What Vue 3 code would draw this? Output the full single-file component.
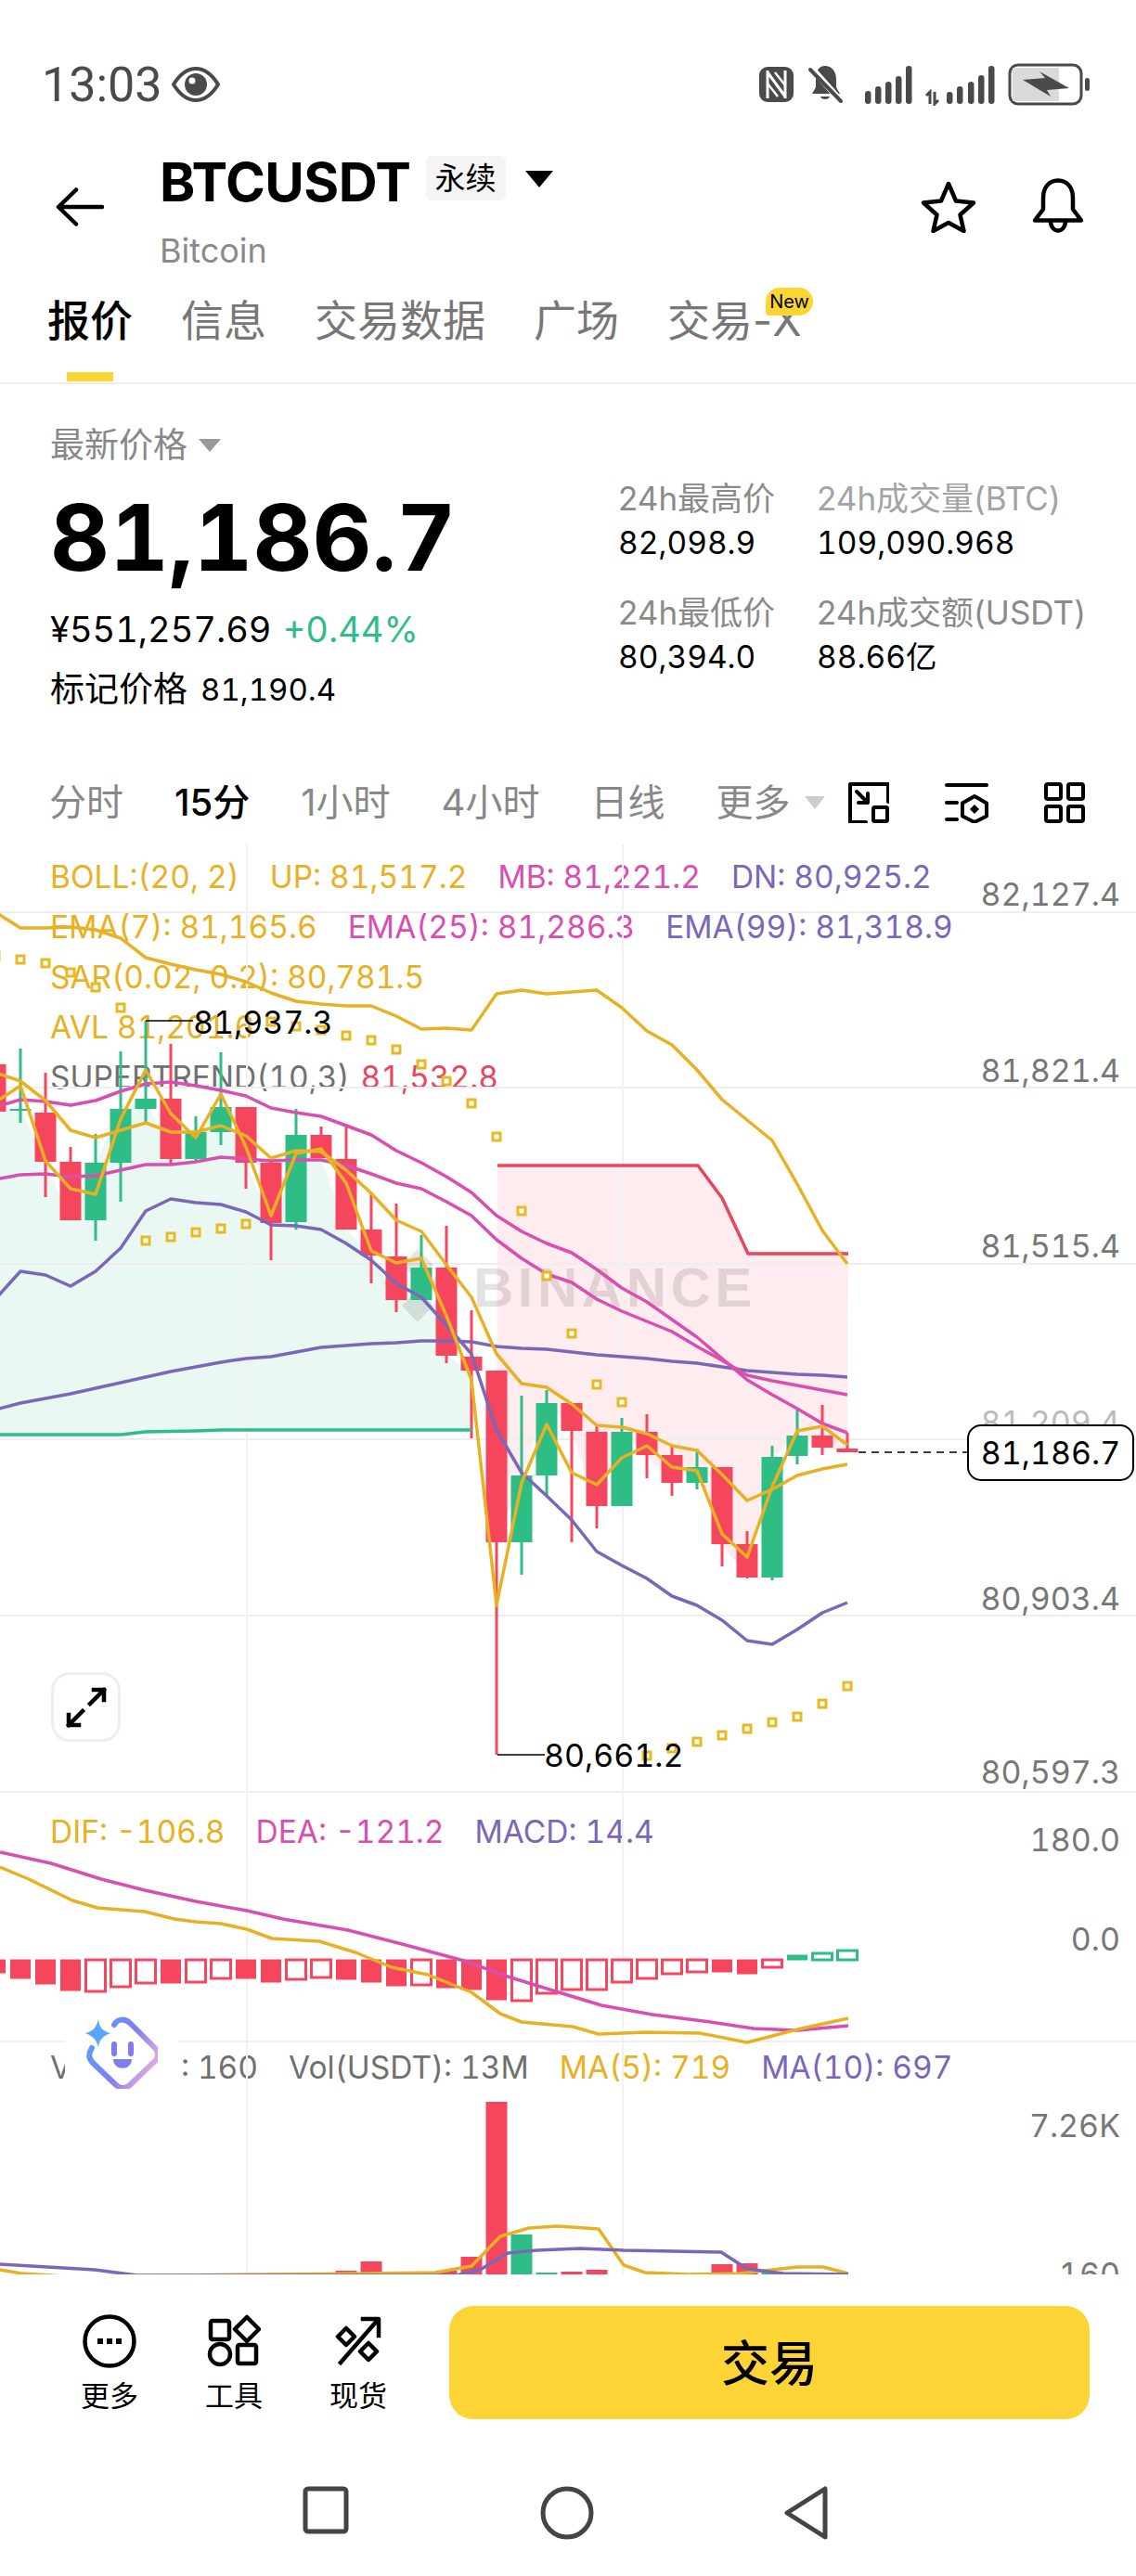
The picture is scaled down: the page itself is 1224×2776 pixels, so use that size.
<template>
  <div class="page">
    <!-- status bar -->
    <div class="status">
      <span class="clock">13:03</span>
      <svg class="eye" width="54" height="38" viewBox="0 0 54 38">
        <path d="M3 19C11 6 19 2 27 2s16 4 24 17c-8 13-16 17-24 17S11 32 3 19z" fill="none" stroke="#4a4a4a" stroke-width="4"/>
        <circle cx="27" cy="19" r="12" fill="#4a4a4a"/>
        <circle cx="23" cy="15" r="3.5" fill="#fff"/>
      </svg>
      <svg class="sys" width="358" height="46" viewBox="816 68 358 46">
        <rect x="818" y="72" width="37" height="38" rx="9" fill="#4a4a4a"/>
        <path d="M827 76v30M846 76v30M827 78l19 26" fill="none" stroke="#fff" stroke-width="3"/>
        <path d="M835 78l11 14M827 90l11 14" stroke="#fff" stroke-width="2.4"/>
        <path d="M889 71c7 0 12 6 12 14v9l4 7h-30l4-7v-9c0-8 3-14 10-14z" fill="#4a4a4a"/>
        <path d="M884 104c1 4 9 4 10 0z" fill="#4a4a4a"/>
        <path d="M874 73l33 37" stroke="#fff" stroke-width="7"/>
        <path d="M873 75l33 34" stroke="#4a4a4a" stroke-width="4" stroke-linecap="round"/>
        <rect v-for="b in signalA" :key="b.x" :x="b.x" :y="b.y" width="6.5" :height="112 - b.y" rx="3.2" fill="#4a4a4a"/>
        <path d="M1002 112V99l-4 4M1007 99v13l4-4" fill="none" stroke="#4a4a4a" stroke-width="3"/>
        <rect v-for="b in signalB" :key="b.x" :x="b.x" :y="b.y" width="6.5" :height="112 - b.y" rx="3.2" fill="#4a4a4a"/>
        <rect x="1088" y="70" width="77" height="42" rx="9" fill="#fff" stroke="#4a4a4a" stroke-width="3"/>
        <path d="M1091 73h50v36h-50z" fill="#dadada"/>
        <path d="M1102 86l24-2-6-7 32 18-24 2 4 7z" fill="#4a4a4a"/>
        <rect x="1169" y="84" width="5" height="14" rx="2.5" fill="#4a4a4a"/>
      </svg>
    </div>

    <!-- title -->
    <div class="head">
      <svg class="back" width="52" height="42" viewBox="0 0 52 42" fill="none" stroke="#000" stroke-width="4.5" stroke-linecap="round" stroke-linejoin="round">
        <path d="M50 21H4M22 2.500 3 21l19 18.500"/>
      </svg>
      <div class="head-text">
        <div class="title-row">
          <span class="symbol">BTCUSDT</span>
          <span class="badge">永续</span>
          <i class="caret-big"></i>
        </div>
        <div class="coin">Bitcoin</div>
      </div>
      <svg class="star" width="60" height="56" viewBox="0 0 60 56">
        <path d="M30 3l8 18.500 19 2-14.500 13 4 17.500L30 45 13.500 54l4-17.500L3 23.500l19-2z" fill="none" stroke="#000" stroke-width="4.500" stroke-linejoin="round"/>
      </svg>
      <svg class="bell" width="58" height="60" viewBox="0 0 58 60" fill="none" stroke="#000" stroke-width="4.500" stroke-linejoin="round">
        <path d="M29 2.500c11 0 16 9 16 19v12l9 12H4l9-12v-12c0-10 5-19 16-19z"/>
        <path d="M21 46c0 14 16 14 16 0"/>
      </svg>
    </div>

    <!-- tabs -->
    <div class="tabs">
      <div v-for="t in tabs" :key="t" class="tab" :class="{ active: t === '报价' }">
        {{ t }}
        <span v-if="t === '交易-X'" class="new">New</span>
      </div>
    </div>

    <!-- quote -->
    <div class="quote">
      <div class="quote-left">
        <div class="last-label">最新价格<i class="caret-grey"></i></div>
        <div class="last-price">81,186.7</div>
        <div class="sub-line">¥551,257.69 <span class="up">+0.44%</span></div>
        <div class="mark-line">标记价格<span class="mark-num">81,190.4</span></div>
      </div>
      <div class="stats">
        <div v-for="s in stats" :key="s.label" class="stat">
          <div class="stat-label">{{ s.label }}</div>
          <div class="stat-value">{{ s.value }}</div>
        </div>
      </div>
    </div>

    <!-- intervals -->
    <div class="intervals">
      <span v-for="k in intervals" :key="k" class="itv" :class="{ current: k === '15分' }">{{ k }}</span>
      <i class="caret-light"></i>
      <div class="itv-icons">
        <svg width="44" height="44" viewBox="0 0 44 44" fill="none" stroke="#000" stroke-width="4" stroke-linecap="round" stroke-linejoin="round">
          <path d="M43 21V2H2v41h17"/>
          <rect x="27" y="27" width="15" height="15" rx="1.500"/>
          <path d="M9 10l12 12M21 12v10H11"/>
        </svg>
        <svg width="47" height="44" viewBox="0 0 47 44" fill="none" stroke="#000" stroke-width="4" stroke-linecap="round" stroke-linejoin="round">
          <path d="M2 3h43M2 22h11M2 40h11"/>
          <path d="M32 15l13 7.500v14L32 43l-13-6.500v-14z"/>
          <path d="M32 24l5 5-5 5-5-5z" fill="#000" stroke="none"/>
        </svg>
        <svg width="44" height="44" viewBox="0 0 44 44" fill="none" stroke="#000" stroke-width="4" stroke-linejoin="round">
          <rect x="2" y="2" width="16" height="16" rx="2"/><rect x="26" y="2" width="16" height="16" rx="2"/>
          <rect x="2" y="26" width="16" height="16" rx="2"/><rect x="26" y="26" width="16" height="16" rx="2"/>
        </svg>
      </div>
    </div>

    <!-- chart -->
    <div class="chart">
      <div class="legend main-legend">
        <div class="row">
          <span class="c-y">BOLL:(20, 2)</span><span class="c-y">UP: 81,517.2</span>
          <span class="c-m">MB: 81,221.2</span><span class="c-p">DN: 80,925.2</span>
        </div>
        <div class="row">
          <span class="c-y">EMA(7): 81,165.6</span><span class="c-m">EMA(25): 81,286.3</span>
          <span class="c-p">EMA(99): 81,318.9</span>
        </div>
        <div class="row"><span class="c-y">SAR(0.02, 0.2): 80,781.5</span></div>
        <div class="row"><span class="c-y">AVL 81,201.6</span></div>
        <div class="row tight"><span class="c-g">SUPERTREND(10,3)</span><span class="c-r">81,532.8</span></div>
      </div>
      <div class="legend macd-legend">
        <div class="row">
          <span class="c-y">DIF: -106.8</span><span class="c-m">DEA: -121.2</span><span class="c-p">MACD: 14.4</span>
        </div>
      </div>
      <div class="legend vol-legend">
        <div class="row">
          <span class="c-g">Vol(BTC): 160</span><span class="c-g">Vol(USDT): 13M</span>
          <span class="c-y">MA(5): 719</span><span class="c-p">MA(10): 697</span>
        </div>
      </div>

      <svg class="plot" width="1224" height="1541" viewBox="0 912 1224 1541">
        <defs>
          <linearGradient id="aiGrad" x1="0" y1="0" x2="1" y2="0.500">
            <stop offset="0" stop-color="#58a6fb"/>
            <stop offset="0.6" stop-color="#7f7df0"/>
            <stop offset="1" stop-color="#d8a9dc"/>
          </linearGradient>
        </defs>

        <polygon :points="greenFill" fill="#2ebd85" fill-opacity="0.1"/>
        <polygon :points="redFill" fill="#f6465d" fill-opacity="0.1"/>

        <line v-for="y in gridY" :key="y" x1="0" x2="1224" :y1="y" :y2="y" stroke="#eeeeee" stroke-width="2"/>
        <line v-for="x in [266, 671]" :key="x" :x1="x" :x2="x" y1="912" y2="2453" stroke="#f2f2f2" stroke-width="2"/>

        <text x="510" y="1410" class="wm">BINANCE</text>
        <path d="M450 1348l17 17-17 17-17-17zM425 1373l12 12-12 12-12-12zM475 1373l12 12-12 12-12-12zM450 1392l17 17-17 18-17-18z" fill="#000" fill-opacity="0.1"/>

        <g v-for="c in candleBars" :key="c.x">
          <line :x1="c.x" :x2="c.x" :y1="c.wt" :y2="c.wb" :stroke="c.color" stroke-width="3"/>
          <rect :x="c.x - 11.500" :y="c.bt" width="23" :height="c.bb - c.bt" :fill="c.color"/>
        </g>

        <polyline points="-5,1548 131,1548 156,1545 211,1544 238,1543 509,1543" class="ln" stroke="#2ebd85"/>
        <polyline points="536,1258 752,1258 778,1293 806,1353 914,1353" class="ln" stroke="#e8465f"/>

        <polyline :points="line(bollUp)" class="ln" stroke="#e8b123"/>
        <polyline :points="line(purpleLow)" class="ln" stroke="#7b67b8"/>
        <polyline :points="line(ema99)" class="ln" stroke="#7b67b8"/>
        <polyline :points="line(magentaUp)" class="ln" stroke="#d84fb1"/>
        <polyline :points="line(magentaLow)" class="ln" stroke="#d84fb1"/>
        <polyline :points="line(avl)" class="ln" stroke="#e8b123"/>
        <polyline :points="line(ema7)" class="ln" stroke="#e8b123"/>

        <rect v-for="d in sarDots" :key="d.x" :x="d.x - 4" :y="d.y - 4" width="8" height="8" fill="#fff" stroke="#e8b923" stroke-width="3"/>

        <!-- high / low labels -->
        <line x1="157" x2="208" y1="1102" y2="1102" stroke="#000" stroke-width="1.500"/>
        <text x="208" y="1116" class="tx-black">81,937.3</text>
        <line x1="536" x2="587" y1="1893" y2="1893" stroke="#000" stroke-width="1.500"/>
        <text x="586" y="1906" class="tx-black">80,661.2</text>

        <!-- axis -->
        <text v-for="a in axis" :key="a.t" x="1207" :y="a.y" class="tx-axis" :class="{ faded: a.faded }">{{ a.t }}</text>

        <!-- last price -->
        <line x1="925" x2="1042" y1="1567" y2="1567" stroke="#000" stroke-width="1.500" stroke-dasharray="8 6"/>
        <rect x="1043" y="1538" width="178" height="59" rx="14" fill="#fff" stroke="#000" stroke-width="2"/>
        <text x="1132" y="1580" class="tx-price">81,186.7</text>

        <!-- macd -->
        <rect v-for="b in macdBars" :key="b.x" :x="b.x - 10.500" :y="b.y" width="21" :height="b.h"
              :fill="b.solid ? b.color : '#fff'" :stroke="b.color" :stroke-width="b.solid ? 1 : 3"/>
        <polyline :points="pts(dea)" class="ln" stroke="#d84fb1"/>
        <polyline :points="pts(dif)" class="ln" stroke="#e8b123"/>

        <!-- volume -->
        <rect v-for="v in volBars" :key="v.x" :x="v.x - 11.500" :y="v.y" width="23" :height="2453 - v.y" :fill="v.color"/>
        <polyline :points="pts(ma5)" class="ln" stroke="#e8b123"/>
        <polyline :points="pts(ma10)" class="ln" stroke="#7b67b8"/>
      </svg>

      <button class="expand">
        <svg width="46" height="46" viewBox="0 0 46 46" fill="none" stroke="#000" stroke-width="4.500" stroke-linecap="square">
          <path d="M27 19L42 4M31 4h11v11M19 27L4 42M4 31v11h11"/>
        </svg>
      </button>

      <div class="ai">
        <svg width="78" height="78" viewBox="0 0 78 78">
          <path d="M31 9c4-7 12-7 18-1l26 26c4 4 4 10 0 14L48 74c-5 4-10 4-15 0L8 50C3 45 3 40 7 34" fill="none" stroke="url(#aiGrad)" stroke-width="6" stroke-linecap="round"/>
          <path d="M14 3c1 9 5 13 13 15-8 3-12 7-13 15-2-8-6-12-14-15 8-2 12-6 14-15z" fill="#58a6fb"/>
          <rect x="28" y="27" width="6" height="16" rx="3" fill="#7f7df0"/>
          <rect x="46" y="27" width="6" height="16" rx="3" fill="#7f7df0"/>
          <path d="M30 46h20c0 13-20 13-20 0z" fill="#7f7df0"/>
        </svg>
      </div>
    </div>

    <!-- toolbar -->
    <div class="toolbar">
      <div class="tool">
        <svg width="58" height="58" viewBox="0 0 58 58">
          <circle cx="29" cy="29" r="26.500" fill="none" stroke="#000" stroke-width="4.500"/>
          <rect x="16" y="26" width="6" height="6" fill="#000"/><rect x="26" y="26" width="6" height="6" fill="#000"/><rect x="36" y="26" width="6" height="6" fill="#000"/>
        </svg>
        <span>更多</span>
      </div>
      <div class="tool">
        <svg width="58" height="58" viewBox="0 0 58 58" fill="none" stroke="#000" stroke-width="4.500" stroke-linejoin="round">
          <rect x="4" y="7" width="20" height="20" rx="2"/>
          <path d="M43 3l13 13-13 13-13-13z"/>
          <circle cx="14" cy="43" r="11"/>
          <rect x="33" y="33" width="20" height="20" rx="2"/>
        </svg>
        <span>工具</span>
      </div>
      <div class="tool">
        <svg width="58" height="58" viewBox="0 0 58 58" fill="none" stroke="#000" stroke-width="4.500" stroke-linejoin="round">
          <path d="M16 15l9 9-9 9-9-9zM40 31l9 9-9 9-9-9z"/>
          <path d="M10 52L50 6M34 5h17v18" stroke-linecap="square"/>
        </svg>
        <span>现货</span>
      </div>
      <button class="trade">交易</button>
    </div>

    <!-- system navigation -->
    <div class="nav">
      <svg width="50" height="52" viewBox="0 0 50 52"><rect x="3" y="3" width="44" height="46" rx="3" fill="none" stroke="#444" stroke-width="5"/></svg>
      <svg width="58" height="58" viewBox="0 0 58 58"><circle cx="29" cy="29" r="26" fill="none" stroke="#444" stroke-width="5"/></svg>
      <svg width="48" height="58" viewBox="0 0 48 58"><path d="M44 3v52L3 29z" fill="none" stroke="#444" stroke-width="5" stroke-linejoin="round"/></svg>
    </div>
  </div>
</template>

<script setup>
const tabs = ['报价', '信息', '交易数据', '广场', '交易-X']
const intervals = ['分时', '15分', '1小时', '4小时', '日线', '更多']
const stats = [
  { label: '24h最高价', value: '82,098.9' },
  { label: '24h成交量(BTC)', value: '109,090.968' },
  { label: '24h最低价', value: '80,394.0' },
  { label: '24h成交额(USDT)', value: '88.66亿' }
]

const signalA = [
  { x: 932, y: 98 }, { x: 943, y: 93 }, { x: 954, y: 88 }, { x: 965, y: 82 }, { x: 976, y: 71 }
]
const signalB = [
  { x: 1020, y: 99 }, { x: 1031, y: 93 }, { x: 1043, y: 88 }, { x: 1054, y: 81 }, { x: 1065, y: 71 }
]

const gridY = [985, 1174, 1364, 1553, 1743, 1933, 2202]
const axis = [
  { t: '82,127.4', y: 978 },
  { t: '81,821.4', y: 1168 },
  { t: '81,515.4', y: 1357 },
  { t: '81,209.4', y: 1547, faded: true },
  { t: '80,903.4', y: 1737 },
  { t: '80,597.3', y: 1924 },
  { t: '180.0', y: 1997 },
  { t: '0.0', y: 2104 },
  { t: '7.26K', y: 2305 },
  { t: '160', y: 2465 }
]

// index 0 is the candle cut off at the left edge
const xAt = (i) => -5 + 27 * i

// wick top, wick bottom, body top, body bottom, colour
const candles = [
  [1140, 1205, 1149, 1200, 'r'], [1132, 1212, 1197, 1199, 'g'], [1158, 1292, 1201, 1254, 'r'],
  [1238, 1317, 1254, 1317, 'r'], [1224, 1339, 1255, 1317, 'g'], [1135, 1297, 1197, 1255, 'g'],
  [1102, 1212, 1186, 1197, 'g'], [1127, 1257, 1186, 1251, 'r'], [1205, 1253, 1222, 1251, 'g'],
  [1136, 1236, 1195, 1222, 'g'], [1195, 1283, 1195, 1255, 'r'], [1250, 1360, 1255, 1320, 'r'],
  [1197, 1327, 1225, 1319, 'g'], [1216, 1250, 1225, 1250, 'r'], [1215, 1327, 1251, 1327, 'r'],
  [1287, 1385, 1327, 1355, 'r'], [1299, 1416, 1356, 1403, 'r'], [1333, 1403, 1368, 1403, 'g'],
  [1323, 1471, 1368, 1463, 'r'], [1414, 1552, 1464, 1479, 'r'], [1479, 1893, 1479, 1664, 'r'],
  [1506, 1699, 1592, 1664, 'g'], [1500, 1615, 1514, 1592, 'g'], [1514, 1664, 1514, 1544, 'r'],
  [1537, 1649, 1545, 1625, 'r'], [1530, 1625, 1545, 1625, 'g'], [1526, 1595, 1545, 1570, 'r'],
  [1559, 1614, 1570, 1600, 'r'], [1563, 1607, 1583, 1600, 'g'], [1583, 1690, 1583, 1666, 'r'],
  [1652, 1703, 1666, 1702, 'r'], [1560, 1705, 1572, 1702, 'g'], [1521, 1580, 1549, 1571, 'g'],
  [1516, 1570, 1549, 1562, 'r'], [1546, 1567, 1563, 1567, 'r']
]
const RED = '#f6465d'
const GREEN = '#2ebd85'
const candleBars = candles.map(([wt, wb, bt, bb, k], i) => ({
  x: xAt(i), wt, wb, bt, bb, color: k === 'r' ? RED : GREEN,
  close: k === 'r' ? bb : bt
}))

const bollUp = [985, 1002, 1002, 1001, 1004, 1013, 1034, 1041, 1047, 1052, 1060, 1072, 1081, 1084, 1086, 1086, 1097, 1111, 1110, 1112, 1073, 1069, 1073, 1071, 1069, 1088, 1113, 1128, 1155, 1187, 1209, 1231, 1278, 1328, 1364]
const magentaUp = [1195, 1187, 1189, 1193, 1188, 1178, 1170, 1168, 1172, 1177, 1183, 1196, 1201, 1205, 1215, 1225, 1242, 1255, 1270, 1287, 1312, 1329, 1342, 1352, 1370, 1390, 1405, 1424, 1443, 1466, 1489, 1505, 1520, 1536, 1546]
const magentaLow = [1273, 1268, 1267, 1270, 1269, 1263, 1257, 1257, 1254, 1249, 1251, 1253, 1252, 1252, 1258, 1267, 1277, 1283, 1297, 1312, 1338, 1358, 1375, 1384, 1402, 1415, 1426, 1437, 1453, 1468, 1484, 1490, 1495, 1500, 1505]
const ema99 = [1521, 1514, 1509, 1504, 1498, 1492, 1486, 1480, 1475, 1470, 1466, 1464, 1459, 1454, 1452, 1450, 1449, 1447, 1447, 1448, 1453, 1455, 1456, 1459, 1462, 1464, 1466, 1469, 1471, 1475, 1479, 1481, 1483, 1484, 1486]
const purpleLow = [1402, 1372, 1376, 1388, 1372, 1347, 1307, 1294, 1298, 1300, 1308, 1322, 1323, 1327, 1342, 1360, 1385, 1400, 1430, 1461, 1543, 1589, 1614, 1640, 1674, 1689, 1703, 1722, 1732, 1748, 1770, 1774, 1758, 1740, 1729]
const ema7 = [1190, 1172, 1253, 1283, 1289, 1208, 1155, 1202, 1228, 1181, 1238, 1312, 1245, 1240, 1277, 1350, 1363, 1358, 1420, 1489, 1732, 1600, 1537, 1589, 1602, 1573, 1560, 1583, 1587, 1655, 1680, 1604, 1544, 1539, 1559]
const avl = [1158, 1167, 1188, 1220, 1228, 1220, 1212, 1222, 1222, 1215, 1226, 1250, 1242, 1243, 1263, 1288, 1317, 1329, 1365, 1400, 1461, 1493, 1497, 1515, 1538, 1540, 1547, 1560, 1565, 1591, 1619, 1607, 1592, 1585, 1580]

const line = (ys) => ys.map((y, i) => `${xAt(i)},${y}`).join(' ')
const pts = (list) => list.map((p) => p.join(',')).join(' ')

// supertrend fill runs from the closes to the trend line
const closes = candleBars.map((c) => `${c.x},${c.close}`)
const greenFill = closes.slice(0, 20).join(' ') + ' 509,1543 238,1543 211,1544 156,1545 131,1548 -5,1548'
const redFill = '536,1258 752,1258 778,1293 806,1353 914,1353 ' + closes.slice(20).reverse().join(' ')

const sarY = [
  1032, 1036, 1040, 1050, 1066, 1088, 1339, 1335, 1330, 1326, 1321, 1103, 1108, 1112, 1118, 1123, 1133, 1149,
  1167, 1191, 1227, 1307, 1377, 1439, 1494, 1513, 1894, 1886, 1879, 1872, 1865, 1858, 1852, 1838, 1819
]
const sarDots = sarY.map((y, i) => ({ x: xAt(i), y }))

// bottom edge (or top for the green ones), solid or hollow
const ZERO = 2114
const macd = [
  [2128, 1], [2134, 1], [2140, 1], [2147, 1], [2148, 0], [2143, 0], [2139, 0], [2139, 1], [2138, 0], [2134, 0],
  [2134, 1], [2138, 1], [2135, 0], [2133, 0], [2135, 1], [2138, 1], [2142, 1], [2141, 0], [2144, 1], [2146, 1],
  [2157, 1], [2158, 0], [2150, 0], [2146, 0], [2146, 0], [2138, 0], [2134, 0], [2129, 0], [2127, 0], [2127, 1],
  [2129, 1], [2122, 0], [2109, 1], [2107, 0], [2104, 0]
]
const macdBars = macd.map(([edge, solid], i) => ({
  x: xAt(i),
  y: Math.min(edge, ZERO),
  h: Math.abs(edge - ZERO),
  solid: !!solid,
  color: edge < ZERO ? GREEN : RED
}))
const dea = [[0, 1998], [55, 2010], [109, 2027], [156, 2039], [211, 2051], [266, 2061], [305, 2070], [375, 2082], [437, 2098], [500, 2115], [547, 2132], [602, 2149], [648, 2163], [703, 2173], [758, 2180], [812, 2188], [859, 2190], [914, 2185]]
const dif = [[0, 2014], [31, 2027], [78, 2050], [105, 2058], [156, 2062], [188, 2070], [211, 2073], [238, 2075], [266, 2081], [293, 2091], [344, 2094], [383, 2106], [422, 2122], [461, 2130], [508, 2149], [539, 2172], [562, 2181], [617, 2186], [645, 2194], [695, 2192], [754, 2193], [805, 2203], [859, 2189], [914, 2177]]

const volBars = [
  { x: 373, y: 2449, color: RED }, { x: 400, y: 2439, color: RED }, { x: 427, y: 2452, color: RED },
  { x: 481, y: 2449, color: RED }, { x: 508, y: 2434, color: RED }, { x: 535, y: 2267, color: RED },
  { x: 562, y: 2410, color: GREEN }, { x: 589, y: 2451, color: GREEN }, { x: 616, y: 2450, color: RED },
  { x: 643, y: 2448, color: RED }, { x: 778, y: 2442, color: RED }, { x: 805, y: 2441, color: RED },
  { x: 832, y: 2451, color: GREEN }
]
const ma5 = [[0, 2448], [23, 2452], [70, 2455], [398, 2452], [469, 2451], [508, 2444], [539, 2412], [570, 2403], [601, 2401], [645, 2404], [672, 2443], [695, 2451], [742, 2453], [797, 2452], [859, 2445], [887, 2445], [914, 2452]]
const ma10 = [[0, 2442], [102, 2448], [148, 2454], [492, 2454], [519, 2447], [547, 2430], [578, 2427], [625, 2425], [672, 2427], [777, 2429], [805, 2447], [844, 2452], [914, 2453]]
</script>

<style>
html, body { margin: 0; background: #fff; }
</style>

<style scoped>
.page {
  width: 1224px;
  height: 2776px;
  overflow: hidden;
  background: #fff;
  color: #000;
  font-family: Inter, "Noto Sans CJK SC", sans-serif;
  font-variant-numeric: tabular-nums;
}

.status {
  height: 150px;
  box-sizing: border-box;
  padding: 66px 50px 0 45px;
  display: flex;
  align-items: flex-start;
  color: #4a4a4a;
}
.clock {
  font-family: Roboto, sans-serif;
  font-size: 52px;
  line-height: 52px;
}
.eye { margin: 6px 0 0 9px; }
.sys { margin: 2px 0 0 auto; }

.head {
  height: 150px;
  display: flex;
  position: relative;
  box-sizing: border-box;
  padding-left: 60px;
}
.back { margin-top: 52px; flex: none; }
.head-text { margin-left: 64px; }
.title-row {
  display: flex;
  align-items: center;
  height: 78px;
  margin-top: 7px;
  margin-left: -4px;
}
.symbol {
  font-size: 58px;
  font-weight: 700;
  letter-spacing: -0.5px;
  line-height: 78px;
  font-variant-numeric: normal;
}
.badge {
  margin-left: 16px;
  width: 86px;
  height: 48px;
  background: #f5f5f5;
  border-radius: 6px;
  font-size: 33px;
  line-height: 48px;
  text-align: center;
  margin-top: -8px;
}
.caret-big {
  margin: -6px 0 0 21px;
  border-left: 15px solid transparent;
  border-right: 15px solid transparent;
  border-top: 18px solid #000;
}
.coin {
  font-size: 36px;
  line-height: 44px;
  color: #8a8a8a;
  margin-top: 13px;
  margin-left: -4px;
}
.star { position: absolute; left: 992px; top: 45px; }
.bell { position: absolute; left: 1111px; top: 42px; }

.tabs {
  height: 114px;
  box-sizing: border-box;
  padding: 0 0 0 51px;
  display: flex;
  gap: 52px;
  border-bottom: 2px solid #eeeeee;
}
.tab {
  position: relative;
  font-size: 46px;
  line-height: 90px;
  color: #777;
  white-space: nowrap;
  font-variant-numeric: normal;
}
.tab.active {
  color: #000;
  font-weight: 500;
}
.tab.active::after {
  content: "";
  position: absolute;
  left: 21px;
  bottom: 1px;
  width: 50px;
  height: 10px;
  background: #fcd535;
}
.new {
  position: absolute;
  left: 106px;
  top: 10px;
  width: 51px;
  height: 30px;
  border-radius: 15px 15px 15px 4px;
  background: #fcd535;
  color: #000;
  font-size: 20px;
  line-height: 30px;
  text-align: center;
}

.quote {
  height: 406px;
  box-sizing: border-box;
  padding: 42px 0 0 54px;
  display: flex;
}
.quote-left { width: 612px; flex: none; }
.last-label {
  font-size: 37px;
  line-height: 48px;
  color: #888;
  display: flex;
  align-items: center;
}
.caret-grey {
  margin-left: 12px;
  border-left: 12px solid transparent;
  border-right: 12px solid transparent;
  border-top: 14px solid #999;
}
.last-price {
  font-size: 99px;
  font-weight: 700;
  line-height: 110px;
  margin-top: 20px;
}
.sub-line {
  font-size: 38px;
  line-height: 46px;
  margin-top: 21px;
}
.up { color: #2ebd85; margin-left: 2px; }
.mark-line {
  font-size: 37px;
  line-height: 46px;
  margin-top: 19px;
  display: flex;
  align-items: center;
}
.mark-num {
  font-size: 33px;
  margin-left: 14px;
}
.stats {
  display: grid;
  grid-template-columns: 214px 320px;
  grid-auto-rows: 123px;
  align-content: start;
  margin-top: 57px;
}
.stat-label {
  font-size: 35px;
  line-height: 48px;
  color: #8a8a8a;
  white-space: nowrap;
  font-variant-numeric: normal;
}
.stat:nth-child(2) .stat-label { color: #a3a3a3; }
.stat-value {
  font-size: 33.500px;
  line-height: 48px;
  white-space: nowrap;
}

.intervals {
  height: 90px;
  box-sizing: border-box;
  padding: 0 56px 0 53px;
  display: flex;
  align-items: center;
  gap: 55px;
}
.itv {
  font-size: 40px;
  line-height: 78px;
  color: #888;
  white-space: nowrap;
  flex: none;
  font-variant-numeric: normal;
}
.itv.current { color: #000; font-weight: 500; }
.caret-light {
  margin-left: -39px;
  border-left: 11px solid transparent;
  border-right: 11px solid transparent;
  border-top: 14px solid #ccc;
}
.itv-icons {
  margin-left: -30px;
  display: flex;
  align-items: center;
  gap: 60px;
}

.chart {
  position: relative;
  height: 1541px;
  overflow: hidden;
  border-top: 0;
}
.plot { position: absolute; left: 0; top: 0; display: block; }
.legend {
  position: absolute;
  left: 54px;
  font-size: 33.500px;
  white-space: nowrap;
}
.legend .row {
  height: 54px;
  line-height: 54px;
  display: flex;
  gap: 33px;
}
.legend .row.tight { gap: 12px; }
.main-legend { top: 8px; }
.macd-legend { top: 1037px; }
.vol-legend { top: 1291px; }
.c-y { color: #e8b123; }
.c-m { color: #d84fb1; }
.c-p { color: #7b67b8; }
.c-r { color: #e8465f; }
.c-g { color: #707070; }

.ln { fill: none; stroke-width: 3.5; stroke-linejoin: round; }
.wm {
  font-family: "Liberation Sans", sans-serif;
  font-weight: 700;
  font-size: 60px;
  letter-spacing: 4.5px;
  fill: rgba(0, 0, 0, 0.11);
}
.tx-black { font-size: 34px; fill: #000; }
.tx-axis { font-size: 34px; fill: #777; text-anchor: end; }
.tx-axis.faded { fill: #bbb; }
.tx-price { font-size: 34px; fill: #000; text-anchor: middle; }

.expand {
  position: absolute;
  left: 55px;
  top: 892px;
  width: 75px;
  height: 75px;
  box-sizing: border-box;
  padding: 0;
  background: #fff;
  border: 3px solid #eeeeee;
  border-radius: 20px;
  display: flex;
  align-items: center;
  justify-content: center;
}
.ai {
  position: absolute;
  left: 70px;
  top: 1252px;
  width: 122px;
  height: 100px;
  background: #fff;
  display: flex;
  align-items: center;
  justify-content: center;
}

.toolbar {
  height: 187px;
  box-sizing: border-box;
  padding: 34px 50px 0 0;
  display: flex;
  align-items: flex-start;
}
.tool {
  width: 134px;
  flex: none;
  display: flex;
  flex-direction: column;
  align-items: center;
  font-size: 31px;
  line-height: 40px;
  margin-top: 9px;
}
.tool:first-child { margin-left: 51px; }
.tool span { margin-top: 10px; }
.trade {
  margin-left: auto;
  width: 690px;
  height: 122px;
  border: 0;
  border-radius: 26px;
  background: #fdd436;
  color: #000;
  font-family: inherit;
  font-size: 52px;
  font-weight: 500;
  padding-bottom: 6px;
}

.nav {
  height: 136px;
  display: flex;
  align-items: flex-start;
  padding: 41px 0 0 326px;
  gap: 0;
}
.nav svg:nth-child(2) { margin-left: 206px; }
.nav svg:nth-child(3) { margin-left: 205px; }
</style>
